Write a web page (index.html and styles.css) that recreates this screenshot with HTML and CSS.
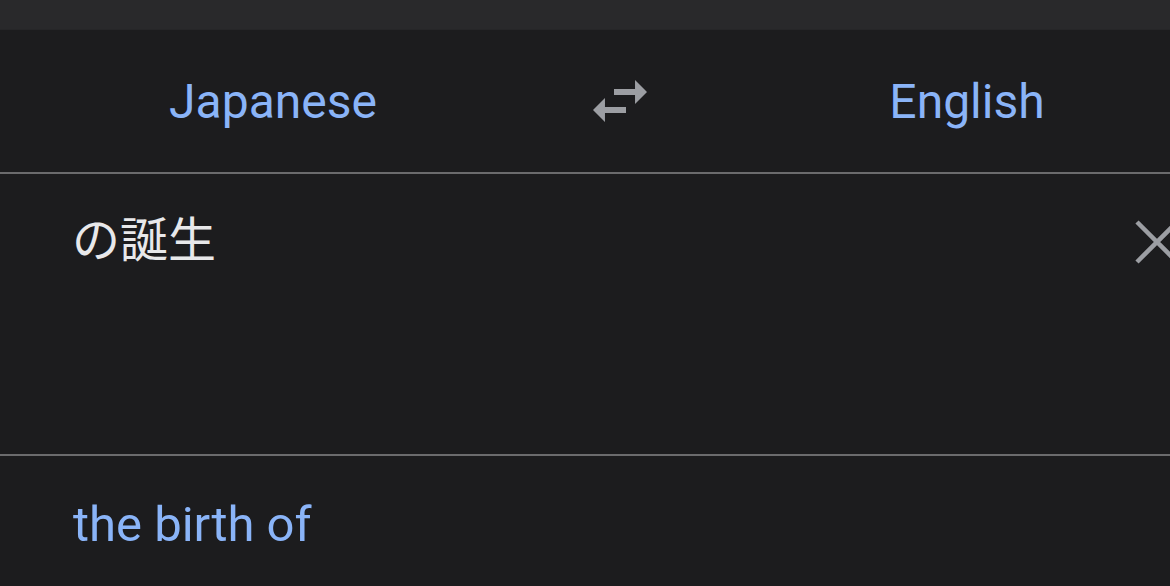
FILE: index.html
```html
<!DOCTYPE html>
<html lang="ja">
<head>
<meta charset="utf-8">
<link rel="stylesheet" href="styles.css">
</head>
<body>
<div class="app">
  <div class="topbar"></div>
  <div class="langbar">
    <div class="lang">Japanese</div>
    <button class="swap" aria-label="swap">
      <svg width="72" height="72" viewBox="0 0 24 24"><path fill="#9c9ea3" d="M6.99 11L3 15l3.99 4v-3H14v-2H6.99v-3zM21 9l-3.99-4v3H10v2h7.01v3L21 9z"/></svg>
    </button>
    <div class="lang">English</div>
  </div>
  <div class="input">
    <div class="source">の誕生</div>
    <button class="clear" aria-label="clear">
      <svg width="44" height="44" viewBox="0 0 44 44"><path d="M2 2L42 42M42 2L2 42" stroke="#9c9ea3" stroke-width="4.5" fill="none"/></svg>
    </button>
  </div>
  <div class="output">
    <div class="result">the birth of</div>
  </div>
</div>
</body>
</html>
```
FILE: styles.css
```css
html, body {
  margin: 0;
  padding: 0;
  background: #1c1c1e;
  overflow: hidden;
}
.app {
  width: 1240px;
  height: 586px;
  display: flex;
  flex-direction: column;
  font-family: Roboto, "Noto Sans CJK JP", sans-serif;
}
.topbar {
  height: 29px;
  background: #29292b;
  border-bottom: 1px solid #262628;
}
.langbar {
  height: 142px;
  display: grid;
  grid-template-columns: 1fr 148px 1fr;
  align-items: center;
  border-bottom: 2px solid #6b6b6d;
}
.lang {
  text-align: center;
  color: #8ab4f8;
  font-size: 48px;
  line-height: 1;
  padding-top: 2px;
}
.swap, .clear {
  background: none;
  border: 0;
  padding: 0;
  display: flex;
  justify-content: center;
  align-items: center;
}
.input {
  height: 280px;
  display: flex;
  align-items: flex-start;
  justify-content: space-between;
  border-bottom: 2px solid #6b6b6d;
  padding: 0 0 0 72px;
}
.source {
  color: #e8e8ea;
  font-family: "Noto Sans CJK JP", sans-serif;
  font-size: 48px;
  line-height: 1;
  margin-top: 38px;
}
.clear {
  margin-top: 46px;
  margin-right: 61px;
}
.output {
  flex: 1;
  padding-left: 73px;
}
.result {
  color: #8ab4f8;
  font-size: 49px;
  line-height: 1;
  margin-top: 44px;
}
```
